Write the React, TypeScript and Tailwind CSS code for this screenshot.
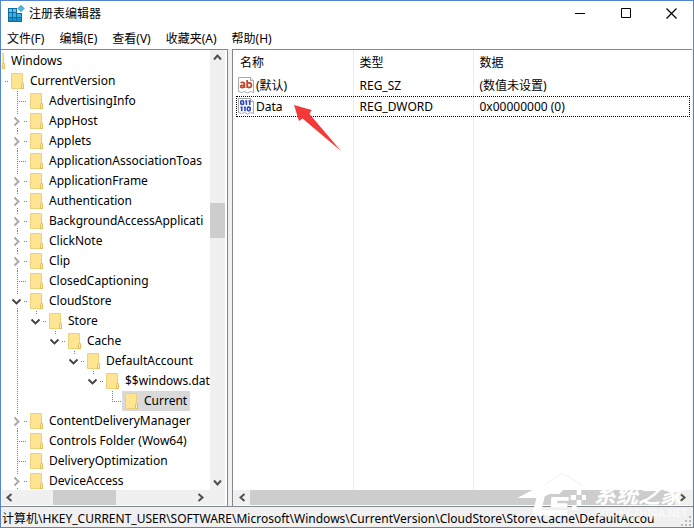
import { useState } from 'react'
import clsx from 'clsx'

type Marker = 'open' | 'closed' | 'leaf'

interface TreeNode {
  name: string
  depth: number
  marker: Marker
  last?: boolean
}

const NODES: TreeNode[] = [
  { name: 'Windows', depth: 0, marker: 'open' },
  { name: 'CurrentVersion', depth: 1, marker: 'open', last: true },
  { name: 'AdvertisingInfo', depth: 2, marker: 'leaf' },
  { name: 'AppHost', depth: 2, marker: 'closed' },
  { name: 'Applets', depth: 2, marker: 'closed' },
  { name: 'ApplicationAssociationToas', depth: 2, marker: 'leaf' },
  { name: 'ApplicationFrame', depth: 2, marker: 'closed' },
  { name: 'Authentication', depth: 2, marker: 'closed' },
  { name: 'BackgroundAccessApplicati', depth: 2, marker: 'closed' },
  { name: 'ClickNote', depth: 2, marker: 'closed' },
  { name: 'Clip', depth: 2, marker: 'closed' },
  { name: 'ClosedCaptioning', depth: 2, marker: 'leaf' },
  { name: 'CloudStore', depth: 2, marker: 'open' },
  { name: 'Store', depth: 3, marker: 'open', last: true },
  { name: 'Cache', depth: 4, marker: 'open', last: true },
  { name: 'DefaultAccount', depth: 5, marker: 'open', last: true },
  { name: '$$windows.dat', depth: 6, marker: 'open', last: true },
  { name: 'Current', depth: 7, marker: 'leaf', last: true },
  { name: 'ContentDeliveryManager', depth: 2, marker: 'closed' },
  { name: 'Controls Folder (Wow64)', depth: 2, marker: 'leaf' },
  { name: 'DeliveryOptimization', depth: 2, marker: 'leaf' },
  { name: 'DeviceAccess', depth: 2, marker: 'closed' }
]

const MENUS = ['文件(F)', '编辑(E)', '查看(V)', '收藏夹(A)', '帮助(H)']

const VALUES = [
  { name: '(默认)', type: 'REG_SZ', data: '(数值未设置)', binary: false },
  { name: 'Data', type: 'REG_DWORD', data: '0x00000000 (0)', binary: true }
]

const PATH =
  '计算机\\HKEY_CURRENT_USER\\SOFTWARE\\Microsoft\\Windows\\CurrentVersion\\CloudStore\\Store\\Cache\\DefaultAccou'

function AppIcon() {
  return (
    <svg width="18" height="18" viewBox="0 0 18 18" className="shrink-0">
      <path d="M1 3h9v5h5v9H1z" fill="#0f6c9c" />
      <path d="M2 4h3v3H2zM6 4h3v3H6z" fill="#5ccbf2" />
      <path d="M2 8h3v4H2zM6 8h3v4H6zM10 9h4v3h-4z" fill="#34b2e4" />
      <path d="M2 13h3v3H2zM6 13h3v3H6zM10 13h4v3h-4z" fill="#1a8fc8" />
      <path d="M14 0.500l3 3-3 3-3-3z" fill="#4fbfe8" stroke="#0f75a8" strokeWidth="0.800" />
    </svg>
  )
}

function FolderIcon() {
  return (
    <svg width="14" height="18" viewBox="0 0 14 18" className="shrink-0">
      <path d="M0.500 1.500h11v10h1v5h-12z" fill="#ffe591" stroke="#ecd07a" />
      <path d="M10.500 16.500v-4l1-1.500 1 1.500v4z" fill="#ffefb5" stroke="#e2bd58" />
    </svg>
  )
}

function ValueIcon({ binary }: { binary: boolean }) {
  return (
    <svg width="16" height="17" viewBox="0 0 16 17" className="shrink-0">
      <path d="M0.500 0.500h12l3 3v12l-3-1-3 1.500-3-1.500-3 1-3-1z" fill="#fff" stroke="#a9a9a9" />
      <path d="M12.500 0.500v3h3" fill="#eee" stroke="#a9a9a9" />
      {binary ? (
        <g fill="none" stroke="#2745c4" strokeWidth="1.600">
          <rect x="2.800" y="2.800" width="2.800" height="3.600" rx="1" />
          <path d="M7.200 3h1.200v4M10.500 3h1.200v4M2.500 9.300h1.200v4M5.800 9.300h1.200v4" />
          <rect x="9.400" y="9.100" width="2.800" height="3.600" rx="1" />
        </g>
      ) : (
        <g fill="none" stroke="#c8472c" strokeWidth="1.800">
          <path d="M2.600 5.900c1-.8 3.800-.9 3.800 1v4M6.400 8.100c-2 0-3.900.1-3.800 1.500.2 1.500 3.200 1.200 3.800-.2" />
          <path d="M9.200 3v7.900M9.200 7c.7-1.700 4.200-1.700 4.200 1.200s-3.500 2.800-4.200 1.100" />
        </g>
      )}
    </svg>
  )
}

function Gutter({ marker, last, depth }: { marker: Marker; last?: boolean; depth: number }) {
  const leaf = marker === 'leaf'
  return (
    <svg width="19" height="20" viewBox="0 0 19 20" className="shrink-0" fill="none">
      <g stroke="#808080" strokeDasharray="1 1">
        {depth > 1 && <path d={leaf ? 'M9.500 0v11' : 'M9.500 0v3'} />}
        {!last && <path d={leaf ? 'M9.500 10v10' : 'M9.500 17v3'} />}
        <path d={leaf ? 'M9 10.500h10' : 'M16 10.500h3'} />
      </g>
      {marker === 'closed' && <path d="M6.500 6.500l4 4-4 4" stroke="#a6a6a6" strokeWidth="1.800" />}
      {marker === 'open' && <path d="M4.500 8.500l4 4 4-4" stroke="#404040" strokeWidth="1.800" />}
    </svg>
  )
}

function Guide({ visible }: { visible: boolean }) {
  return (
    <svg width="19" height="20" className="shrink-0">
      {visible && <path d="M9.500 0v20" stroke="#808080" strokeDasharray="1 1" />}
    </svg>
  )
}

const ARROWS = {
  up: 'M4 9.500l3.500-4 3.500 4',
  down: 'M4 5.500l3.500 4 3.500-4',
  left: 'M9.500 4l-4 3.500 4 3.500',
  right: 'M5.500 4l4 3.500-4 3.500'
}

function ArrowButton({ dir, label }: { dir: keyof typeof ARROWS; label: string }) {
  return (
    <button aria-label={label} className="shrink-0">
      <svg width="15" height="15" viewBox="0 0 15 15" fill="none" stroke="#505050" strokeWidth="2">
        <path d={ARROWS[dir]} />
      </svg>
    </button>
  )
}

function TitleBar() {
  return (
    <header className="flex h-[25px] shrink-0 items-center pl-[6px]">
      <AppIcon />
      <h1 className="ml-1 flex-1">注册表编辑器</h1>
      <button aria-label="最小化" className="flex h-full w-[46px] items-center justify-center">
        <svg width="11" height="11" stroke="#000">
          <path d="M0 5.500h10" />
        </svg>
      </button>
      <button aria-label="最大化" className="flex h-full w-[46px] items-center justify-center">
        <svg width="11" height="11" fill="none" stroke="#000">
          <path d="M0.500 0.500h9v9h-9z" />
        </svg>
      </button>
      <button aria-label="关闭" className="flex h-full w-[44px] items-center justify-center">
        <svg width="11" height="11" stroke="#000" strokeWidth="1.200">
          <path d="M0.500 0.500l10 10M10.500 0.500l-10 10" />
        </svg>
      </button>
    </header>
  )
}

function KeyTree() {
  const [selected, setSelected] = useState('Current')

  return (
    <section className="flex w-[227px] shrink-0 flex-col border-t border-r border-[#828790] bg-white pr-[2px] pb-[1px] pl-px">
      <div className="flex min-h-0 flex-1">
        <div className="min-w-0 flex-1 overflow-hidden">
          <ul role="tree" className="-ml-8 pt-px">
            {NODES.map((node) => (
              <li
                key={node.name}
                role="treeitem"
                aria-selected={node.name === selected}
                className="flex h-5 items-center whitespace-nowrap"
                onClick={() => setSelected(node.name)}
              >
                {Array.from({ length: node.depth }, (_, i) => (
                  <Guide key={i} visible={i === 2} />
                ))}
                <Gutter marker={node.marker} last={node.last} depth={node.depth} />
                <span
                  className={clsx(
                    'flex h-full shrink-0 items-center gap-[5px] pr-[3px] pl-[3px]',
                    node.name === selected && 'bg-[#d9d9d9]'
                  )}
                >
                  <FolderIcon />
                  {node.name}
                </span>
              </li>
            ))}
          </ul>
        </div>
        <div className="flex w-[15px] shrink-0 flex-col bg-[#f0f0f0]">
          <ArrowButton dir="up" label="向上滚动" />
          <div className="flex flex-1 flex-col">
            <div className="grow-[138]" />
            <div className="h-[35px] bg-[#cdcdcd]" />
            <div className="grow-[236]" />
          </div>
          <ArrowButton dir="down" label="向下滚动" />
        </div>
      </div>
      <div className="flex h-[15px] shrink-0 bg-[#f0f0f0] pr-[17px]">
        <ArrowButton dir="left" label="向左滚动" />
        <div className="flex flex-1">
          <div className="grow-[36]" />
          <div className="w-[63px] bg-[#cdcdcd]" />
          <div className="grow-[77]" />
        </div>
        <ArrowButton dir="right" label="向右滚动" />
      </div>
    </section>
  )
}

function ValueList() {
  const cell = 'border-l border-[#e2f0f6] pl-[6px]'

  return (
    <section className="relative flex min-w-0 flex-1 flex-col border-t border-l border-[#828790] bg-white pb-[1px]">
      <div className="min-h-0 flex-1 overflow-hidden pr-[2px] pl-[3px]">
        <table className="h-full w-full table-fixed border-collapse text-left">
          <colgroup>
            <col className="w-[117px]" />
            <col className="w-[120px]" />
            <col />
          </colgroup>
          <thead>
            <tr className="h-[25px]">
              <th className="pl-1 font-normal">名称</th>
              <th className={clsx(cell, 'font-normal')}>类型</th>
              <th className={clsx(cell, 'font-normal')}>数据</th>
            </tr>
          </thead>
          <tbody>
            {VALUES.map((value) => (
              <tr
                key={value.name}
                className={clsx(
                  'h-[21px]',
                  value.binary && 'outline-1 -outline-offset-1 outline-dotted outline-black'
                )}
              >
                <td>
                  <div className="flex items-center gap-[2px] pl-[2px]">
                    <ValueIcon binary={value.binary} />
                    {value.name}
                  </div>
                </td>
                <td className={cell}>{value.type}</td>
                <td className={cell}>{value.data}</td>
              </tr>
            ))}
            <tr>
              <td />
              <td className={cell} />
              <td className={cell} />
            </tr>
          </tbody>
        </table>
      </div>
      <div className="flex h-[15px] shrink-0 bg-[#f0f0f0] px-[2px]">
        <ArrowButton dir="left" label="向左滚动" />
        <div className="flex-1 bg-[#cdcdcd]" />
        <ArrowButton dir="right" label="向右滚动" />
      </div>
      {/* pointer to the Data value */}
      <svg
        width="48"
        height="48"
        viewBox="0 0 48 48"
        className="pointer-events-none absolute top-[54px] left-[60px]"
      >
        <path d="M1 1l17.500 5-2 4L48 47 9.500 14.500l-3.500 2.500z" fill="#f5393a" />
      </svg>
    </section>
  )
}

function Watermark() {
  return (
    <div className="pointer-events-none absolute right-0 bottom-0 h-[58px] w-[179px] text-white">
      <svg width="179" height="58" viewBox="0 0 537 174" className="absolute inset-0">
        <path d="M92 46L145 12l60 38" fill="none" stroke="#f5f5f5" strokeWidth="4" />
        <g fill="#fff">
          <path d="M10 87L66 58h86l-16 17h-30L84 87z" />
          <path d="M68 84h24l-10 40h78v16H54z" />
          <path d="M112 84h52v11h-34v8h30v12h-50z" />
          <path d="M170 78h16v15h-16zM188 62h14v16h-14zM188 93h14v15h-14zM204 78h12v15h-12zM174 108h14v15h-14z" />
        </g>
      </svg>
      <div className="absolute top-[13px] left-[80px] text-[22px] leading-6 font-bold italic">系统之家</div>
      <div className="absolute top-[38px] left-[80px] text-[10px] leading-3 font-bold opacity-60">
        XITONGZHIJIA.NET
      </div>
    </div>
  )
}

export default function App() {
  return (
    <div className="relative flex h-screen flex-col overflow-hidden border border-[#5585cf] bg-white font-['Noto_Sans','Noto_Sans_CJK_SC',sans-serif] text-[12px] leading-4 text-black">
      <TitleBar />
      <nav className="flex h-[23px] shrink-0 items-center gap-[3px] pt-[2px]">
        {MENUS.map((menu) => (
          <button key={menu} className="px-[6px]">
            {menu}
          </button>
        ))}
      </nav>
      <main className="flex min-h-0 flex-1 gap-1 bg-[#f0f0f0] pr-px">
        <KeyTree />
        <ValueList />
      </main>
      <footer className="flex h-[21px] shrink-0 items-center border-t border-[#828790] bg-[#f0f0f0] pl-px">
        <p className="min-w-0 flex-1 overflow-hidden pt-1 whitespace-nowrap">{PATH}</p>
        <svg width="15" height="20" fill="#b4b9c2" className="shrink-0">
          <path d="M11 9h2v2h-2zM11 13h2v2h-2zM7 13h2v2H7zM11 17h2v2h-2zM7 17h2v2H7zM3 17h2v2H3z" />
        </svg>
      </footer>
      <Watermark />
    </div>
  )
}
